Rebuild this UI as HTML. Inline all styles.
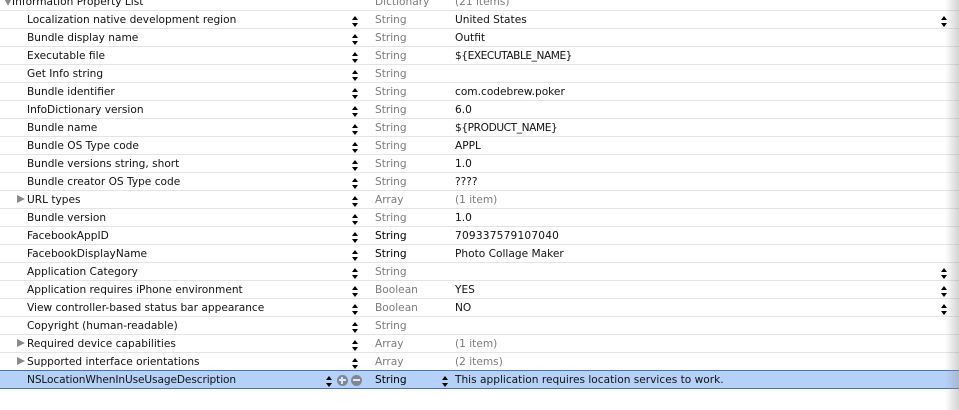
<!DOCTYPE html>
<html><head><meta charset="utf-8">
<style>
html,body{margin:0;padding:0;width:959px;height:410px;overflow:hidden;background:#fff}
#w{position:relative;width:959px;height:410px;overflow:hidden;filter:blur(.35px);font:10.6px/18px "DejaVu Sans","Liberation Sans",sans-serif;color:#111}
.r{position:absolute;left:0;width:959px;height:18px;border-bottom:1px solid #e4e4e4;box-sizing:content-box;margin-top:-1px}
.r>span{position:absolute;top:1px;white-space:nowrap}
.n{left:27px}.t{left:375px;color:#7c7c7c}.v{left:455px}.g{color:#7c7c7c}.b{color:#000}
.s{position:absolute;top:5px;width:6px;height:11px;left:351.5px}
.s:before,.s:after{content:"";position:absolute;left:0;border-left:3px solid transparent;border-right:3px solid transparent}
.s:before{top:.5px;border-bottom:4px solid #000}
.s:after{top:7.5px;border-top:4px solid #000}
.e{left:941px}
.d{position:absolute;left:17px;top:5px;border-left:8px solid #8a8a8a;border-top:4.5px solid transparent;border-bottom:4.5px solid transparent}
.sel{background:#b5d1f8;border-top:1px solid #4a72b4;border-bottom:1px solid #4a72b4;height:17px;margin-top:-1px}
.sel>span{top:0}
.sel .s{top:4px}
.c{position:absolute;top:3.5px;width:11px;height:11px;border-radius:50%;background:#7f8794}
.c:before{content:"";position:absolute;left:2px;top:4.5px;width:7px;height:2px;background:#dde6f2}
.p:after{content:"";position:absolute;left:4.5px;top:2px;width:2px;height:7px;background:#dde6f2}
#sh{position:absolute;left:945px;top:0;width:14px;height:410px;background:linear-gradient(to right,rgba(150,150,150,0),rgba(150,150,150,.42))}
</style></head><body>
<div id="w">
<div class="r" style="top:-7px"><div class="d" style="left:4px;top:6px;border:0;border-top:8px solid #8a8a8a;border-left:4.5px solid transparent;border-right:4.5px solid transparent"></div><span style="left:12px">Information Property List</span><span class="t">Dictionary</span><span class="v g">(21 items)</span></div>
<div class="r" style="top:11px"><span class="n">Localization native development region</span><i class="s"></i><span class="t">String</span><span class="v">United States</span><i class="s e"></i></div>
<div class="r" style="top:29px"><span class="n">Bundle display name</span><i class="s"></i><span class="t">String</span><span class="v">Outfit</span></div>
<div class="r" style="top:47px"><span class="n">Executable file</span><i class="s"></i><span class="t">String</span><span class="v" style="letter-spacing:-.45px">${EXECUTABLE_NAME}</span></div>
<div class="r" style="top:65px"><span class="n">Get Info string</span><i class="s"></i><span class="t">String</span></div>
<div class="r" style="top:83px"><span class="n">Bundle identifier</span><i class="s"></i><span class="t">String</span><span class="v">com.codebrew.poker</span></div>
<div class="r" style="top:101px"><span class="n">InfoDictionary version</span><i class="s"></i><span class="t">String</span><span class="v">6.0</span></div>
<div class="r" style="top:119px"><span class="n">Bundle name</span><i class="s"></i><span class="t">String</span><span class="v" style="letter-spacing:-.4px">${PRODUCT_NAME}</span></div>
<div class="r" style="top:137px"><span class="n">Bundle OS Type code</span><i class="s"></i><span class="t">String</span><span class="v">APPL</span></div>
<div class="r" style="top:155px"><span class="n">Bundle versions string, short</span><i class="s"></i><span class="t">String</span><span class="v">1.0</span></div>
<div class="r" style="top:173px"><span class="n">Bundle creator OS Type code</span><i class="s"></i><span class="t">String</span><span class="v">????</span></div>
<div class="r" style="top:191px"><div class="d"></div><span class="n">URL types</span><i class="s"></i><span class="t">Array</span><span class="v g">(1 item)</span></div>
<div class="r" style="top:209px"><span class="n">Bundle version</span><i class="s"></i><span class="t">String</span><span class="v">1.0</span></div>
<div class="r" style="top:227px"><span class="n">FacebookAppID</span><i class="s"></i><span class="t b">String</span><span class="v" style="letter-spacing:.2px">709337579107040</span></div>
<div class="r" style="top:245px"><span class="n">FacebookDisplayName</span><i class="s"></i><span class="t b">String</span><span class="v">Photo Collage Maker</span></div>
<div class="r" style="top:263px"><span class="n">Application Category</span><i class="s"></i><span class="t">String</span><i class="s e"></i></div>
<div class="r" style="top:281px"><span class="n">Application requires iPhone environment</span><i class="s"></i><span class="t">Boolean</span><span class="v">YES</span><i class="s e"></i></div>
<div class="r" style="top:299px"><span class="n">View controller-based status bar appearance</span><i class="s"></i><span class="t">Boolean</span><span class="v">NO</span><i class="s e"></i></div>
<div class="r" style="top:317px"><span class="n">Copyright (human-readable)</span><i class="s"></i><span class="t">String</span></div>
<div class="r" style="top:335px"><div class="d"></div><span class="n">Required device capabilities</span><i class="s"></i><span class="t">Array</span><span class="v g">(1 item)</span></div>
<div class="r" style="top:353px"><div class="d"></div><span class="n">Supported interface orientations</span><i class="s"></i><span class="t">Array</span><span class="v g">(2 items)</span></div>
<div class="r sel" style="top:371px"><span class="n" style="letter-spacing:-.11px">NSLocationWhenInUseUsageDescription</span><i class="s" style="left:325.5px"></i><i class="c p" style="left:336.5px"></i><i class="c" style="left:351px"></i><span class="t b">String</span><i class="s" style="left:441.5px"></i><span class="v">This application requires location services to work.</span></div>
<div id="sh"></div>
</div>
</body></html>
